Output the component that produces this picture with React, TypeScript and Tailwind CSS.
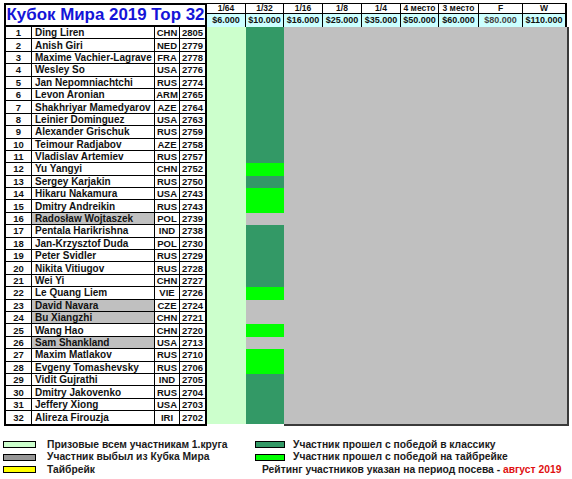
const players: [number, string, string, number, boolean][] = [
  [1, 'Ding Liren', 'CHN', 2805, false],
  [2, 'Anish Giri', 'NED', 2779, false],
  [3, 'Maxime Vachier-Lagrave', 'FRA', 2778, false],
  [4, 'Wesley So', 'USA', 2776, false],
  [5, 'Jan Nepomniachtchi', 'RUS', 2774, false],
  [6, 'Levon Aronian', 'ARM', 2765, false],
  [7, 'Shakhriyar Mamedyarov', 'AZE', 2764, false],
  [8, 'Leinier Dominguez', 'USA', 2763, false],
  [9, 'Alexander Grischuk', 'RUS', 2759, false],
  [10, 'Teimour Radjabov', 'AZE', 2758, false],
  [11, 'Vladislav Artemiev', 'RUS', 2757, false],
  [12, 'Yu Yangyi', 'CHN', 2752, false],
  [13, 'Sergey Karjakin', 'RUS', 2750, false],
  [14, 'Hikaru Nakamura', 'USA', 2743, false],
  [15, 'Dmitry Andreikin', 'RUS', 2743, false],
  [16, 'Radosław Wojtaszek', 'POL', 2739, true],
  [17, 'Pentala Harikrishna', 'IND', 2738, false],
  [18, 'Jan-Krzysztof Duda', 'POL', 2730, false],
  [19, 'Peter Svidler', 'RUS', 2729, false],
  [20, 'Nikita Vitiugov', 'RUS', 2728, false],
  [21, 'Wei Yi', 'CHN', 2727, false],
  [22, 'Le Quang Liem', 'VIE', 2726, false],
  [23, 'David Navara', 'CZE', 2724, true],
  [24, 'Bu Xiangzhi', 'CHN', 2721, true],
  [25, 'Wang Hao', 'CHN', 2720, false],
  [26, 'Sam Shankland', 'USA', 2713, true],
  [27, 'Maxim Matlakov', 'RUS', 2710, false],
  [28, 'Evgeny Tomashevsky', 'RUS', 2706, false],
  [29, 'Vidit Gujrathi', 'IND', 2705, false],
  [30, 'Dmitry Jakovenko', 'RUS', 2704, false],
  [31, 'Jeffery Xiong', 'USA', 2703, false],
  [32, 'Alireza Firouzja', 'IRI', 2702, false],
]

// 1/32 result per row: c = classic win, t = tiebreak win, o = out
const round2 = 'ccccccccccctcttoccccctootottcccc'

const rounds: [string, string, string][] = [
  ['1/64', '$6.000', 'w-[39px]'],
  ['1/32', '$10.000', 'w-[38px]'],
  ['1/16', '$16.000', 'w-[39px]'],
  ['1/8', '$25.000', 'w-[39px]'],
  ['1/4', '$35.000', 'w-[39px]'],
  ['4 место', '$50.000', 'w-[38px]'],
  ['3 место', '$60.000', 'w-[40px]'],
  ['F', '$80.000', 'w-[44px]'],
  ['W', '$110.000', 'w-[44px]'],
]

function LegendItem({ color, text, wide }: { color: string; text: string; wide?: boolean }) {
  return (
    <div className="flex h-[12.4px] items-center">
      <div className={`${wide ? 'w-[33px] mr-[11px]' : 'w-[30px] mr-[8px]'} h-[7px] border border-black ${color}`} />
      <span>{text}</span>
    </div>
  )
}

export default function App() {
  return (
    <div className="h-[479px] w-[572px] overflow-hidden bg-white pl-[4px] pt-[3px] font-['Liberation_Sans',Arial,sans-serif] font-bold text-[#111]">
      {/* Header */}
      <div className="flex h-[24px]">
        <div className="flex w-[203px] items-center justify-center border-2 border-black text-[16.9px] leading-none text-[#1414d8]">
          Кубок Мира 2019 Top 32
        </div>
        {rounds.map(([label, prize, w], i) => (
          <div
            key={label}
            className={`flex flex-col border-black ${w} ${i === rounds.length - 1 ? 'border-r-2' : 'border-r'}`}
          >
            <div className="flex h-[11px] items-center justify-center border-y border-black text-[8.5px] leading-none">
              {label}
            </div>
            <div
              className={`flex h-[13px] items-center justify-center bg-[#ccffff] text-[9px] leading-none ${
                label === 'F' ? 'text-[#444]' : ''
              }`}
            >
              {prize}
            </div>
          </div>
        ))}
      </div>

      {/* Body */}
      <div className="flex items-start">
        <div className="w-[203px] border-x-2 border-b-2 border-black text-[9.5px] leading-[11px]">
          {players.map(([n, name, c, r, out]) => (
            <div key={n} className="flex h-[12.4px] items-stretch border-b border-black last:border-b-0">
              <div className="flex w-[26px] items-center justify-center border-r border-black">{n}</div>
              <div
                className={`flex w-[123px] items-center border-r border-black pl-[3px] text-[10px] ${
                  out ? 'bg-[#c0c0c0]' : ''
                }`}
              >
                <span className="leading-[11px]">{name}</span>
              </div>
              <div className="flex w-[25px] items-center justify-center border-r border-black">{c}</div>
              <div className="flex flex-1 items-center justify-center">{r}</div>
            </div>
          ))}
        </div>
        <div className="h-[396.8px] w-[39px] bg-[#ccffcc]" />
        <div className="w-[38px]">
          {players.map(([n]) => {
            const s = round2[n - 1]
            const bg = s === 'c' ? 'bg-[#339966]' : s === 't' ? 'bg-[#00ff00]' : 'bg-[#c0c0c0]'
            return <div key={n} className={`h-[12.4px] ${bg}`} />
          })}
        </div>
        <div className="h-[398.8px] w-[285px] border-r-2 border-b-2 border-[#3a3a3a] bg-[#c0c0c0]" />
      </div>

      {/* Legend */}
      <div className="-ml-[1px] mt-[13px] grid grid-cols-[252px_1fr] text-[10.3px] leading-none text-[#1a1a1a]">
        <LegendItem wide color="bg-[#ccffcc]" text="Призовые всем участникам 1.круга" />
        <LegendItem color="bg-[#339966]" text="Участник прошел с победой в классику" />
        <LegendItem wide color="bg-[#969696]" text="Участник выбыл из Кубка Мира" />
        <LegendItem color="bg-[#00ff00]" text="Участник прошел с победой на тайбрейке" />
        <LegendItem wide color="bg-[#ffff00]" text="Тайбрейк" />
        <div className="flex h-[12.4px] items-center pl-[7px] text-[10.3px]">
          Рейтинг участников указан на период посева -&nbsp;<span className="text-[#e01010]">август 2019</span>
        </div>
      </div>
    </div>
  )
}
